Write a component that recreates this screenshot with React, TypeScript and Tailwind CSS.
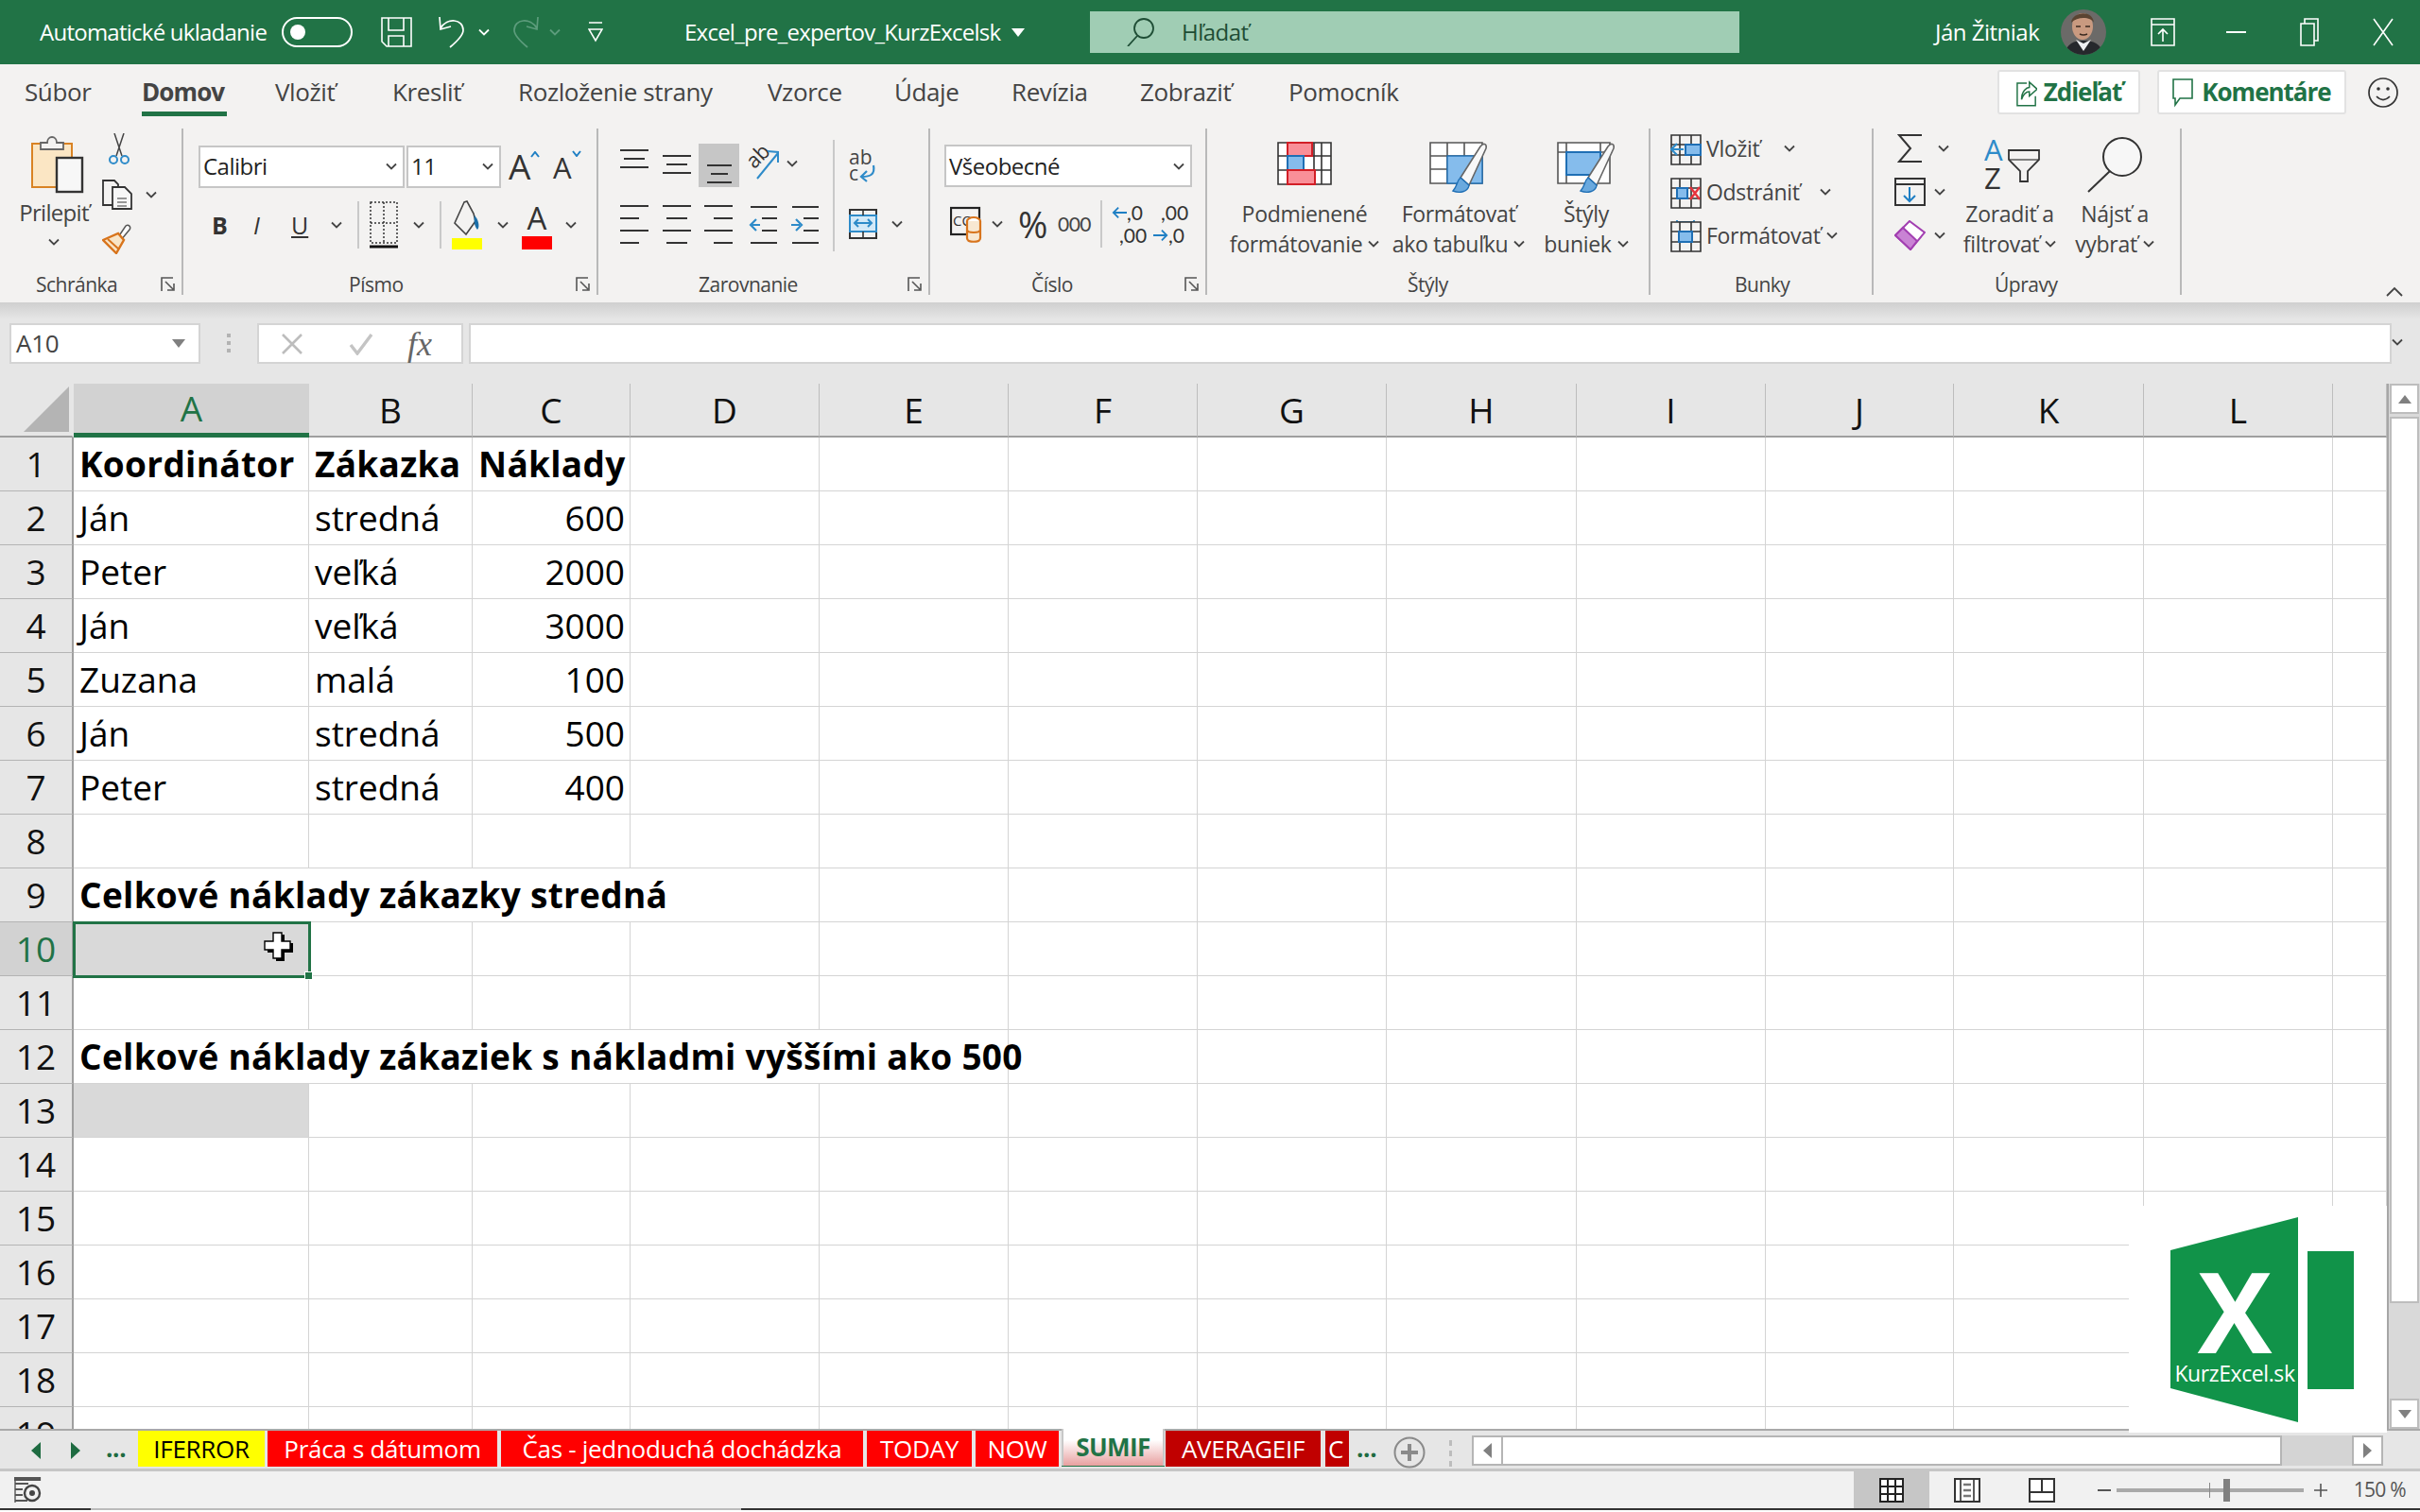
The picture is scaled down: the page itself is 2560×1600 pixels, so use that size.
import React from "react";

const Chev = ({ className = "", color = "#444" }: { className?: string; color?: string }) => (
  <svg width="12" height="8" viewBox="0 0 12 8" className={"shrink-0 " + className}>
    <path d="M1 1.5 6 6.5 11 1.5" fill="none" stroke={color} strokeWidth="1.8" />
  </svg>
);

const Launcher = ({ className = "" }: { className?: string }) => (
  <svg width="16" height="16" viewBox="0 0 16 16" className={"shrink-0 " + className}>
    <path d="M1 15V1h12M5 5l8 8M7 14h7V7" fill="none" stroke="#555" strokeWidth="1.6" />
  </svg>
);

const GroupLabel = ({ children, className = "" }: { children: React.ReactNode; className?: string }) => (
  <span className={"text-[21px] leading-[28px] text-[#444] tracking-[-0.5px] " + className}>{children}</span>
);

const Lines = ({ widths, step = 12, className = "" }: { widths: [number, number][]; step?: number; className?: string }) => (
  <svg width="30" height={(widths.length - 1) * step + 2} viewBox={`0 0 30 ${(widths.length - 1) * step + 2}`} className={"shrink-0 " + className}>
    {widths.map(([a, b], i) => (
      <path key={i} d={`M${a} ${i * step + 1}H${b}`} stroke="#333" strokeWidth="2" />
    ))}
  </svg>
);

const Paste = () => (
  <svg width="58" height="64" viewBox="0 0 58 64" className="shrink-0">
    <rect x="1" y="10" width="42" height="46" fill="#fbe6c4" stroke="#d98324" strokeWidth="2" />
    <path d="M10 16h24" stroke="#999" strokeWidth="2" />
    <path d="M10 16V9h7c0-8 10-8 10 0h7v7z" fill="#f3f2f1" stroke="#666" strokeWidth="1.8" />
    <rect x="27" y="25" width="27" height="36" fill="#f7f7f7" stroke="#333" strokeWidth="2.4" />
  </svg>
);
const Cut = () => (
  <svg width="24" height="34" viewBox="0 0 24 34" className="shrink-0">
    <path d="M7 0l8 24M17 0 9 24" stroke="#444" strokeWidth="1.5" fill="none" />
    <circle cx="6" cy="28" r="4" fill="none" stroke="#2e8bc9" strokeWidth="2" />
    <circle cx="18" cy="28" r="4" fill="none" stroke="#2e8bc9" strokeWidth="2" />
  </svg>
);
const Copy = () => (
  <svg width="32" height="32" viewBox="0 0 32 32" className="shrink-0">
    <path d="M1 1h12l4 4v22H1z" fill="#f3f2f1" stroke="#333" strokeWidth="1.8" />
    <path d="M11 8h13l7 7v16H11z" fill="#f7f7f7" stroke="#333" strokeWidth="1.8" />
    <path d="M16 20h10M16 24h10M16 28h10" stroke="#777" strokeWidth="1.5" />
  </svg>
);
const Brush = () => (
  <svg width="32" height="32" viewBox="0 0 32 32" className="shrink-0">
    <path d="M17 14 25 2c3-2 6 1 4 4l-9 11z" fill="#fff" stroke="#555" strokeWidth="1.5" />
    <path d="M1 17 17 10l6 7-8 14z" fill="#f8e5c8" stroke="#d8741c" strokeWidth="2.4" />
    <path d="M6 16l12 11" stroke="#d8741c" strokeWidth="2" />
  </svg>
);
const Combo = ({ children, className }: { children: React.ReactNode; className: string }) => (
  <div className={"h-[45px] bg-white border-2 border-[#c6c6c6] flex items-center justify-between pl-[3px] pr-[6px] text-[24px] text-[#222] shrink-0 " + className}>
    <span className="tracking-[-0.5px]">{children}</span>
    <Chev />
  </div>
);
const Bucket = () => (
  <svg width="34" height="52" viewBox="0 0 34 52" className="shrink-0">
    <path d="M13 2 3 24l12 12 10-14-2-8L16 1z" fill="#f3f2f1" stroke="#444" strokeWidth="1.6" />
    <path d="M24 16c4 4 6 12 3 15-3-3-4-9-3-15z" fill="#1a6ea8" />
    <rect x="0" y="40" width="32" height="12" fill="#ffff00" />
  </svg>
);
const FontColor = () => (
  <div className="flex flex-col items-center w-[32px] shrink-0">
    <span className="text-[33px] leading-[38px] text-[#333]">A</span>
    <div className="w-[32px] h-[14px] bg-[#ff0000]" />
  </div>
);
const Borders = () => (
  <svg width="30" height="50" viewBox="0 0 30 50" className="shrink-0">
    <path d="M1 1H29V44H1zM15 1V44M1 23H29" fill="none" stroke="#333" strokeWidth="1.5" strokeDasharray="2 2" />
    <path d="M0 48H30" stroke="#111" strokeWidth="3" />
  </svg>
);
const Orient = () => (
  <svg width="36" height="36" viewBox="0 0 36 36" className="shrink-0">
    <text x="1" y="20" fontSize="22" fill="#333" fontFamily="Open Sans" transform="rotate(-45 10 14)">ab</text>
    <path d="M11 34 33 7M22 5l11 1 0 11" fill="none" stroke="#2e8bc9" strokeWidth="2" />
  </svg>
);
const Outdent = ({ flip = false }: { flip?: boolean }) => (
  <svg width="30" height="40" viewBox="0 0 30 40" className="shrink-0">
    <path d="M2 1H30M2 39H30M14 13H30M14 26H30" stroke="#333" strokeWidth="2" />
    {flip ? (
      <path d="M1 20H10M6 14l6 6-6 6" fill="none" stroke="#2e8bc9" strokeWidth="2.2" />
    ) : (
      <path d="M12 20H3M8 14l-6 6 6 6" fill="none" stroke="#2e8bc9" strokeWidth="2.2" />
    )}
  </svg>
);
const Wrap = () => (
  <svg width="30" height="36" viewBox="0 0 30 36" className="shrink-0">
    <text x="0" y="16" fontSize="21" fill="#444" fontFamily="Open Sans">ab</text>
    <text x="0" y="33" fontSize="21" fill="#444" fontFamily="Open Sans">c</text>
    <path d="M26 17c2 10-4 12-12 12M19 23l-6 6 6 5" fill="none" stroke="#2e8bc9" strokeWidth="2.2" />
  </svg>
);
const Merge = () => (
  <svg width="30" height="32" viewBox="0 0 30 32" className="shrink-0">
    <rect x="1" y="1" width="28" height="30" fill="#f3f2f1" stroke="#333" strokeWidth="2" />
    <rect x="1" y="7" width="28" height="17" fill="#d3e9f8" stroke="#2e8bc9" strokeWidth="2" />
    <path d="M15 1V7M15 24V31" stroke="#333" strokeWidth="1.6" />
    <path d="M6 15H24M10 11l-4 4 4 4M20 11l4 4-4 4" fill="none" stroke="#2e8bc9" strokeWidth="2" />
  </svg>
);
const Accounting = () => (
  <svg width="36" height="42" viewBox="0 0 36 42" className="shrink-0">
    <rect x="1" y="4" width="30" height="28" fill="#f3f2f1" stroke="#222" strokeWidth="2.2" />
    <text x="3" y="23" fontSize="15" fill="#333" fontFamily="Open Sans">CC</text>
    <ellipse cx="25" cy="18" rx="7" ry="4" fill="#fff" stroke="#d8741c" strokeWidth="2.2" />
    <path d="M18 18V36c0 5 14 5 14 0V18M18 27c0 4 14 4 14 0" fill="#f8e8d2" stroke="#d8741c" strokeWidth="2.2" />
  </svg>
);
const CondFormat = () => (
  <svg width="58" height="46" viewBox="0 0 58 46" className="shrink-0">
    <path d="M1 1H57V45H1zM1 15H57M1 30H57M11 1V45M39 1V45M47 1V45" fill="#fff" stroke="#333" strokeWidth="1.6" />
    <rect x="11" y="1" width="26" height="14" fill="#f98f98" stroke="#d21f27" strokeWidth="2" />
    <rect x="11" y="15" width="17" height="15" fill="#85bcec" stroke="#1f6fb5" strokeWidth="2" />
    <rect x="11" y="30" width="29" height="15" fill="#f98f98" stroke="#d21f27" strokeWidth="2" />
  </svg>
);
const TableFormat = () => (
  <svg width="62" height="56" viewBox="0 0 62 56" className="shrink-0">
    <path d="M1 1H56V44H1zM1 15H56M1 29H56M19 1V44M37 1V44" fill="#fff" stroke="#555" strokeWidth="1.6" />
    <rect x="19" y="15" width="37" height="29" fill="#85bcec" stroke="#1f6fb5" strokeWidth="1.4" />
    <path d="M33 38 54 5c4-5 7-2 6 2L42 46z" fill="#f8f8f8" stroke="#666" strokeWidth="1.6" />
    <path d="M33 38c-4 3-3 9-8 14 7 3 16 1 17-6z" fill="#6aa9de" stroke="#1f6fb5" strokeWidth="1.4" />
  </svg>
);
const CellStyles = () => (
  <svg width="62" height="56" viewBox="0 0 62 56" className="shrink-0">
    <path d="M1 1H56V44H1zM1 11H56M10 1V44M46 1V11" fill="#fff" stroke="#555" strokeWidth="1.6" />
    <rect x="10" y="11" width="36" height="24" fill="#85bcec" stroke="#1f6fb5" strokeWidth="2" />
    <path d="M33 38 54 5c4-5 7-2 6 2L42 46z" fill="#f8f8f8" stroke="#666" strokeWidth="1.6" />
    <path d="M33 38c-4 3-3 9-8 14 7 3 16 1 17-6z" fill="#6aa9de" stroke="#1f6fb5" strokeWidth="1.4" />
  </svg>
);
const CellGrid = ({ kind }: { kind: "ins" | "del" | "fmt" }) => (
  <svg width="33" height="36" viewBox="0 0 33 36" className="shrink-0">
    {kind === "fmt" && <path d="M7 2V8M25 2V8M7 4H25" stroke="#2e8bc9" strokeWidth="1.8" />}
    <path d="M1 4H32V35H1zM1 14H32M1 25H32M10 4V35M22 4V35" fill="#f3f2f1" stroke="#333" strokeWidth="1.6" />
    {kind === "ins" && <rect x="16" y="14" width="16" height="11" fill="#85bcec" stroke="#1f6fb5" strokeWidth="2" />}
    {kind === "ins" && <path d="M14 19H2M7 13l-6 6 6 6" fill="none" stroke="#2e8bc9" strokeWidth="2.2" />}
    {kind === "del" && <rect x="7" y="14" width="11" height="11" fill="#85bcec" stroke="#1f6fb5" strokeWidth="2" />}
    {kind === "del" && <path d="M21 13 31 26M31 13 21 26" stroke="#e8323c" strokeWidth="2.4" />}
    {kind === "fmt" && <rect x="9" y="14" width="14" height="11" fill="#85bcec" stroke="#1f6fb5" strokeWidth="2" />}
  </svg>
);
const Sigma = () => (
  <svg width="28" height="30" viewBox="0 0 28 30" className="shrink-0">
    <path d="M26 1H2L14 15 2 29H26" fill="none" stroke="#333" strokeWidth="2" />
  </svg>
);
const FillDown = () => (
  <svg width="33" height="30" viewBox="0 0 33 30" className="shrink-0">
    <rect x="1" y="1" width="31" height="28" fill="none" stroke="#333" strokeWidth="2" />
    <path d="M1 7H32" stroke="#333" strokeWidth="2" />
    <path d="M16 10V25M10 19l6 6 6-6" fill="none" stroke="#1f7fc4" strokeWidth="2" />
  </svg>
);
const Eraser = () => (
  <svg width="33" height="32" viewBox="0 0 33 32" className="shrink-0">
    <path d="M1 16 16 1 32 13 17 31z" fill="#fff" stroke="#a23fb1" strokeWidth="2" />
    <path d="M1 16 9 8l15 14-7 9z" fill="#c983d4" stroke="#a23fb1" strokeWidth="2" />
  </svg>
);
const SortFilter = () => (
  <svg width="60" height="56" viewBox="0 0 60 56" className="shrink-0">
    <text x="0" y="26" fontSize="31" fill="#2e8bc9" fontFamily="Open Sans">A</text>
    <text x="0" y="56" fontSize="31" fill="#333" fontFamily="Open Sans">Z</text>
    <path d="M26 15H58V25L46 37V48H38V37L26 25z" fill="#f3f2f1" stroke="#333" strokeWidth="1.8" />
    <path d="M26 25H58" stroke="#333" strokeWidth="1.2" />
  </svg>
);
const Magnifier = () => (
  <svg width="60" height="60" viewBox="0 0 60 60" className="shrink-0">
    <circle cx="38" cy="22" r="20" fill="#f7f7f7" stroke="#333" strokeWidth="2" />
    <path d="M25 37 2 59" stroke="#333" strokeWidth="2" />
  </svg>
);

const TitleBar = () => (
  <div className="h-[68px] shrink-0 bg-[#217346] text-white flex items-center text-[24px]">
    <span className="ml-[42px] w-[243px] whitespace-nowrap tracking-[-0.75px] shrink-0">Automatické ukladanie</span>
    <div className="ml-[13px] w-[75px] h-[32px] rounded-full border-2 border-white flex items-center pl-[7px] shrink-0">
      <div className="w-[16px] h-[16px] rounded-full bg-white" />
    </div>
    <svg width="33" height="32" viewBox="0 0 33 32" className="ml-[30px] shrink-0">
      <path d="M1 1H32V31H6L1 26z" fill="none" stroke="#fff" strokeWidth="1.6" />
      <path d="M8 1V14H24V1M8 31V20H24V31" fill="none" stroke="#fff" strokeWidth="1.6" />
    </svg>
    <svg width="30" height="34" viewBox="0 0 30 34" className="ml-[27px] shrink-0">
      <path d="M2 1 3 14 14 11M3 13C10 1 27 3 27 15 27 21 19 28 13 33" fill="none" stroke="#fff" strokeWidth="1.7" />
    </svg>
    <Chev color="#fff" className="ml-[13px]" />
    <svg width="30" height="34" viewBox="0 0 30 34" className="ml-[23px] shrink-0">
      <path d="M28 1 27 14 16 11M27 13C20 1 3 3 3 15 3 21 11 28 17 33" fill="none" stroke="#5d9c7c" strokeWidth="1.7" />
    </svg>
    <Chev color="#5d9c7c" className="ml-[10px]" />
    <svg width="16" height="22" viewBox="0 0 16 22" className="ml-[29px] shrink-0">
      <path d="M1 1H15M1 8H15L8 20z" fill="none" stroke="#fff" strokeWidth="1.6" />
    </svg>
    <span className="ml-[86px] w-[335px] whitespace-nowrap tracking-[-0.75px] shrink-0">Excel_pre_expertov_KurzExcelsk</span>
    <svg width="14" height="9" viewBox="0 0 14 9" className="ml-[11px] shrink-0">
      <path d="M0 0H14L7 9z" fill="#fff" />
    </svg>
    <div className="ml-[69px] w-[687px] h-[44px] bg-[#a0cdb4] flex items-center shrink-0 text-[#1e4d35]">
      <svg width="30" height="30" viewBox="0 0 30 30" className="ml-[39px] shrink-0">
        <circle cx="18" cy="11" r="10" fill="none" stroke="#1e4d35" strokeWidth="1.8" />
        <path d="M11 19 1 30" stroke="#1e4d35" strokeWidth="1.8" />
      </svg>
      <span className="ml-[28px] tracking-[-0.5px]">Hľadať</span>
    </div>
    <span className="ml-[207px] w-[114px] whitespace-nowrap tracking-[-0.5px] shrink-0">Ján Žitniak</span>
    <svg width="48" height="48" viewBox="0 0 48 48" className="ml-[19px] shrink-0">
      <defs>
        <clipPath id="av"><circle cx="24" cy="24" r="24" /></clipPath>
      </defs>
      <g clipPath="url(#av)">
        <rect width="48" height="48" fill="#6b6a68" />
        <path d="M4 48c2-12 10-15 20-15s19 3 21 15z" fill="#26282c" />
        <path d="M16 32 24 44 32 32 24 36z" fill="#eef0f2" />
        <ellipse cx="23" cy="18" rx="11" ry="14" fill="#c99a80" />
        <path d="M11 14C12 2 34 0 35 14 32 8 18 7 11 14z" fill="#5a4432" />
        <path d="M16 18h5M26 18h5M20 26q4 2 8 0" stroke="#3a2a20" strokeWidth="1.4" fill="none" />
      </g>
    </svg>
    <svg width="26" height="30" viewBox="0 0 26 30" className="ml-[47px] shrink-0">
      <path d="M1 1H25V29H1zM1 7H25" fill="none" stroke="#fff" strokeWidth="1.6" />
      <path d="M13 25V12M8 17l5-5 5 5" fill="none" stroke="#fff" strokeWidth="1.6" />
    </svg>
    <div className="ml-[54px] w-[21px] h-[2px] bg-white shrink-0" />
    <svg width="20" height="30" viewBox="0 0 20 30" className="ml-[57px] shrink-0">
      <path d="M1 6H15V29H1zM5 6V1H19V24H15" fill="none" stroke="#fff" strokeWidth="1.6" />
    </svg>
    <svg width="22" height="30" viewBox="0 0 22 30" className="ml-[57px] shrink-0">
      <path d="M1 1 21 29M21 1 1 29" stroke="#fff" strokeWidth="1.6" />
    </svg>
  </div>
);

const tabs: [string, string][] = [
  ["Vložiť", "w-[124px]"],
  ["Kresliť", "w-[133px]"],
  ["Rozloženie strany", "w-[264px]"],
  ["Vzorce", "w-[134px]"],
  ["Údaje", "w-[124px]"],
  ["Revízia", "w-[136px]"],
  ["Zobraziť", "w-[157px]"],
  ["Pomocník", "w-[140px]"],
];

const TabRow = () => (
  <div className="h-[58px] shrink-0 bg-[#f3f2f1] flex items-start text-[26px] text-[#444] tracking-[-0.4px]">
    <span className="ml-[26px] w-[124px] mt-[11px] leading-[36px] shrink-0">Súbor</span>
    <div className="w-[141px] mt-[11px] flex shrink-0">
      <div className="flex flex-col w-[90px]">
        <span className="leading-[36px] font-bold tracking-[-0.9px]">Domov</span>
        <div className="h-[5px] mt-[3px] bg-[#217346]" />
      </div>
    </div>
    {tabs.map(([t, c]) => (
      <span key={t} className={c + " mt-[11px] leading-[36px] whitespace-nowrap shrink-0"}>{t}</span>
    ))}
    <div className="ml-auto mr-[23px] mt-[6px] flex items-center">
      <div className="w-[151px] h-[47px] bg-white border-2 border-[#e2e2e2] rounded-[3px] flex items-center justify-center text-[#217346] font-bold">
        <svg width="22" height="34" viewBox="0 0 24 36" className="mr-[7px] shrink-0">
          <path d="M12 7H1V33H22V22" fill="none" stroke="#217346" strokeWidth="1.6" />
          <path d="M6 26C6 16 12 12 15 12V6L24 14 15 22V17C11 17 8 20 6 26z" fill="none" stroke="#217346" strokeWidth="1.6" />
        </svg>
        <span className="tracking-[-1px]">Zdieľať</span>
      </div>
      <div className="ml-[18px] w-[200px] h-[47px] bg-white border-2 border-[#e2e2e2] rounded-[3px] flex items-center justify-center text-[#217346] font-bold">
        <svg width="22" height="32" viewBox="0 0 22 32" className="mr-[9px] shrink-0">
          <path d="M1 2H21V22H8L3 29V22H1z" fill="none" stroke="#217346" strokeWidth="1.6" />
        </svg>
        <span className="tracking-[-1px]">Komentáre</span>
      </div>
      <svg width="32" height="32" viewBox="0 0 32 32" className="ml-[23px] shrink-0">
        <circle cx="16" cy="16" r="15" fill="none" stroke="#333" strokeWidth="1.7" />
        <circle cx="11" cy="12" r="1.8" fill="#333" />
        <circle cx="21" cy="12" r="1.8" fill="#333" />
        <path d="M9 20q7 7 14 0" fill="none" stroke="#333" strokeWidth="1.7" />
      </svg>
    </div>
  </div>
);

const groupCls = "h-[176px] mt-[10px] border-r-2 border-[#b9b9b9] flex flex-col shrink-0 ";
const LabelRow = ({ label, labelCls, launcher = true }: { label: string; labelCls: string; launcher?: boolean }) => (
  <div className="h-[22px] flex items-center">
    <GroupLabel className={labelCls}>{label}</GroupLabel>
    {launcher && <Launcher className="ml-auto mr-[6px]" />}
  </div>
);

const BigBtn = ({ icon, l1, l2, iconCls, cls }: { icon: React.ReactNode; l1: string; l2: string; iconCls: string; cls: string }) => (
  <div className={"flex flex-col items-center shrink-0 " + cls}>
    <div className={"flex items-start " + iconCls}>{icon}</div>
    <span className="text-[23px] leading-[32px] text-[#444] tracking-[-0.3px] whitespace-nowrap">{l1}</span>
    <span className="text-[23px] leading-[32px] text-[#444] tracking-[-0.3px] whitespace-nowrap flex items-center">
      {l2}
      <Chev className="ml-[6px]" />
    </span>
  </div>
);

const SmallCellBtn = ({ kind, label, chevCls, cls = "" }: { kind: "ins" | "del" | "fmt"; label: string; chevCls: string; cls?: string }) => (
  <div className={"h-[36px] flex items-center " + cls}>
    <CellGrid kind={kind} />
    <span className="ml-[5px] text-[23px] text-[#444] tracking-[-0.3px] whitespace-nowrap">{label}</span>
    <Chev className={chevCls} />
  </div>
);

const Ribbon = () => (
  <div className="h-[194px] shrink-0 bg-[#f3f2f1] flex">
    {/* Schránka */}
    <div className={groupCls + "w-[194px]"}>
      <div className="h-[154px] flex">
        <div className="ml-[12px] w-[90px] flex flex-col items-center shrink-0">
          <div className="mt-[6px] ml-[10px]"><Paste /></div>
          <span className="mt-[3px] text-[24px] leading-[32px] text-[#444] tracking-[-0.7px]">Prilepiť</span>
          <Chev className="mt-[11px]" />
        </div>
        <div className="ml-[6px] flex flex-col">
          <div className="ml-[6px] mt-[5px]"><Cut /></div>
          <div className="mt-[15px] flex items-center">
            <Copy />
            <Chev className="ml-[14px]" />
          </div>
          <div className="mt-[15px]"><Brush /></div>
        </div>
      </div>
      <LabelRow label="Schránka" labelCls="ml-[38px]" />
    </div>
    {/* Písmo */}
    <div className={groupCls + "w-[439px]"}>
      <div className="h-[154px] flex flex-col">
        <div className="flex items-center mt-[17px] ml-[16px]">
          <Combo className="w-[218px]">Calibri</Combo>
          <Combo className="w-[100px] ml-[2px]">11</Combo>
          <div className="ml-[8px] flex items-start w-[38px]">
            <span className="text-[37px] leading-[44px] text-[#333]">A</span>
            <svg width="10" height="7" viewBox="0 0 10 7" className="mt-[6px] shrink-0"><path d="M1 6 5 1 9 6" fill="none" stroke="#1f7fc4" strokeWidth="2" /></svg>
          </div>
          <div className="ml-[9px] flex items-start">
            <span className="text-[31px] leading-[44px] text-[#333] mt-[2px]">A</span>
            <svg width="10" height="7" viewBox="0 0 10 7" className="mt-[6px] shrink-0"><path d="M1 1 5 6 9 1" fill="none" stroke="#1f7fc4" strokeWidth="2" /></svg>
          </div>
        </div>
        <div className="flex items-center mt-[14px] h-[50px] text-[#333]">
          <span className="ml-[30px] w-[20px] text-[25px] font-bold leading-[30px]">B</span>
          <span className="ml-[24px] w-[16px] text-[25px] italic leading-[30px]">I</span>
          <span className="ml-[24px] w-[20px] text-[25px] underline leading-[30px]">U</span>
          <Chev className="ml-[22px]" />
          <div className="ml-[16px] w-[2px] h-[50px] bg-[#c9c9c9]" />
          <div className="ml-[11px]"><Borders /></div>
          <Chev className="ml-[16px]" />
          <div className="ml-[16px] w-[2px] h-[50px] bg-[#c9c9c9]" />
          <div className="ml-[11px]"><Bucket /></div>
          <Chev className="ml-[14px]" />
          <div className="ml-[14px]"><FontColor /></div>
          <Chev className="ml-[14px]" />
        </div>
      </div>
      <LabelRow label="Písmo" labelCls="ml-[175px]" />
    </div>
    {/* Zarovnanie */}
    <div className={groupCls + "w-[351px]"}>
      <div className="h-[154px] flex">
        <div className="flex flex-col">
          <div className="flex items-start mt-[16px] ml-[23px] h-[46px]">
            <Lines className="mt-[6px]" widths={[[0, 30], [4, 26], [0, 30]]} step={9} />
            <Lines className="mt-[12px] ml-[15px]" widths={[[0, 30], [4, 26], [0, 30]]} step={9} />
            <div className="ml-[8px] w-[43px] h-[46px] bg-[#c6c6c6] flex items-end justify-center pb-[4px]">
              <Lines widths={[[2, 28], [6, 24], [2, 28]]} step={9} />
            </div>
            <div className="ml-[8px] mt-[3px] flex items-center">
              <Orient />
              <Chev className="ml-[6px]" />
            </div>
          </div>
          <div className="flex items-center mt-[19px] ml-[23px]">
            <Lines widths={[[0, 30], [0, 20], [0, 30], [0, 20]]} step={13} />
            <Lines className="ml-[15px]" widths={[[0, 30], [4, 26], [0, 30], [4, 26]]} step={13} />
            <Lines className="ml-[14px]" widths={[[0, 30], [10, 30], [0, 30], [10, 30]]} step={13} />
            <div className="ml-[17px]"><Outdent /></div>
            <div className="ml-[14px]"><Outdent flip /></div>
          </div>
        </div>
        <div className="ml-[15px] w-[2px] h-[118px] mt-[12px] bg-[#c9c9c9] shrink-0" />
        <div className="flex flex-col ml-[15px]">
          <div className="mt-[22px]"><Wrap /></div>
          <div className="mt-[27px] flex items-center">
            <Merge />
            <Chev className="ml-[15px]" />
          </div>
        </div>
      </div>
      <LabelRow label="Zarovnanie" labelCls="ml-[106px]" />
    </div>
    {/* Číslo */}
    <div className={groupCls + "w-[293px]"}>
      <div className="h-[154px] flex flex-col">
        <Combo className="w-[262px] ml-[15px] mt-[17px]">Všeobecné</Combo>
        <div className="flex items-center mt-[14px] h-[50px]">
          <div className="ml-[21px]"><Accounting /></div>
          <Chev className="ml-[8px]" />
          <span className="ml-[16px] text-[38px] leading-[44px] text-[#333] w-[34px] tracking-[-2px]">%</span>
          <span className="ml-[8px] text-[21px] leading-[28px] text-[#444] tracking-[-0.5px] font-['Lato',sans-serif]">000</span>
          <div className="ml-[10px] w-[2px] h-[50px] bg-[#c9c9c9]" />
          <div className="ml-[10px] w-[33px] flex flex-col text-[21px] leading-[24px] text-[#333] font-['Lato',sans-serif]">
            <div className="flex items-center">
              <svg width="18" height="16" viewBox="0 0 18 16"><path d="M18 8H2M8 2 2 8l6 6" fill="none" stroke="#1f7fc4" strokeWidth="2" /></svg>
              <span>,0</span>
            </div>
            <span className="ml-[8px]">,00</span>
          </div>
          <div className="ml-[11px] w-[33px] flex flex-col text-[21px] leading-[24px] text-[#333] font-['Lato',sans-serif]">
            <span className="ml-[8px]">,00</span>
            <div className="flex items-center">
              <svg width="18" height="16" viewBox="0 0 18 16"><path d="M0 8H16M10 2l6 6-6 6" fill="none" stroke="#1f7fc4" strokeWidth="2" /></svg>
              <span>,0</span>
            </div>
          </div>
        </div>
      </div>
      <LabelRow label="Číslo" labelCls="ml-[107px]" />
    </div>
    {/* Štýly */}
    <div className={groupCls + "w-[469px]"}>
      <div className="h-[154px] flex items-start pt-[14px]">
        <BigBtn cls="ml-[17px] w-[172px]" iconCls="h-[60px]" icon={<CondFormat />} l1="Podmienené" l2="formátovanie" />
        <BigBtn cls="ml-[4px] w-[146px]" iconCls="h-[60px]" icon={<TableFormat />} l1="Formátovať" l2="ako tabuľku" />
        <BigBtn cls="ml-[6px] w-[112px]" iconCls="h-[60px]" icon={<CellStyles />} l1="Štýly" l2="buniek" />
      </div>
      <LabelRow label="Štýly" labelCls="ml-[212px]" launcher={false} />
    </div>
    {/* Bunky */}
    <div className={groupCls + "w-[236px]"}>
      <div className="h-[154px] flex flex-col ml-[21px] pt-[3px] gap-[10px]">
        <SmallCellBtn kind="ins" label="Vložiť" chevCls="ml-[26px]" />
        <SmallCellBtn kind="del" label="Odstrániť" chevCls="ml-[21px]" />
        <SmallCellBtn kind="fmt" label="Formátovať" chevCls="ml-[6px]" />
      </div>
      <LabelRow label="Bunky" labelCls="ml-[89px]" launcher={false} />
    </div>
    {/* Úpravy */}
    <div className={groupCls + "w-[326px]"}>
      <div className="h-[154px] flex">
        <div className="flex flex-col ml-[22px] pt-[6px] w-[65px] shrink-0">
          <div className="flex items-center h-[30px] ml-[3px]"><Sigma /><Chev className="ml-[15px]" /></div>
          <div className="flex items-center h-[30px] mt-[16px]"><FillDown /><Chev className="ml-[9px]" /></div>
          <div className="flex items-center h-[32px] mt-[15px]"><Eraser /><Chev className="ml-[9px]" /></div>
        </div>
        <BigBtn cls="ml-[-2px] w-[118px] pt-[8px]" iconCls="h-[66px] ml-[6px]" icon={<SortFilter />} l1="Zoradiť a" l2="filtrovať" />
        <BigBtn cls="ml-[-2px] w-[108px] pt-[8px]" iconCls="h-[66px]" icon={<Magnifier />} l1="Nájsť a" l2="vybrať" />
      </div>
      <LabelRow label="Úpravy" labelCls="ml-[128px]" launcher={false} />
    </div>
    <div className="flex-1 flex items-end justify-end pb-[6px] pr-[18px]">
      <svg width="18" height="11" viewBox="0 0 18 11"><path d="M1 10 9 2l8 8" fill="none" stroke="#444" strokeWidth="1.8" /></svg>
    </div>
  </div>
);

const FormulaBar = () => (
  <div className="h-[86px] shrink-0 flex items-start pt-[22px] bg-[linear-gradient(#cfcfcf,#e6e6e6_18px)]">
    <div className="ml-[10px] w-[202px] h-[43px] bg-white border-2 border-[#d4d4d4] flex items-center justify-between pl-[5px] pr-[14px] text-[26px] text-[#444] shrink-0 tracking-[-0.3px]">
      <span>A10</span>
      <svg width="14" height="9" viewBox="0 0 14 9"><path d="M0 0H14L7 9z" fill="#808080" /></svg>
    </div>
    <div className="ml-[28px] mt-[11px] flex flex-col gap-[4px] shrink-0">
      <div className="w-[4px] h-[4px] bg-[#b3b3b3]" />
      <div className="w-[4px] h-[4px] bg-[#b3b3b3]" />
      <div className="w-[4px] h-[4px] bg-[#b3b3b3]" />
    </div>
    <div className="ml-[28px] w-[218px] h-[43px] bg-white border-2 border-[#d4d4d4] flex items-center shrink-0">
      <svg width="24" height="24" viewBox="0 0 24 24" className="ml-[23px] shrink-0"><path d="M2 2 22 22M22 2 2 22" stroke="#bdbdbd" strokeWidth="2.6" /></svg>
      <svg width="26" height="24" viewBox="0 0 26 24" className="ml-[48px] shrink-0"><path d="M2 13 9 22 24 2" fill="none" stroke="#c4c4c4" strokeWidth="3.4" /></svg>
      <span className="ml-[36px] text-[36px] italic text-[#666] font-['Liberation_Serif',serif] leading-[40px]">fx</span>
    </div>
    <div className="ml-[6px] w-[2034px] h-[43px] bg-white border-2 border-[#d4d4d4] shrink-0" />
    <Chev className="ml-[0px] mt-[16px]" />
  </div>
);

const colCls = ["w-[249px]", "w-[173px]", "w-[167px]", "w-[200px]", "w-[200px]", "w-[200px]", "w-[200px]", "w-[201px]", "w-[200px]", "w-[199px]", "w-[201px]", "w-[200px]", "w-[57px]"];
const colNames = ["A", "B", "C", "D", "E", "F", "G", "H", "I", "J", "K", "L", ""];

type RowData = { n: number; a?: string; b?: string; c?: string; bold?: boolean };
const data: RowData[] = [
  { n: 1, a: "Koordinátor", b: "Zákazka", c: "Náklady", bold: true },
  { n: 2, a: "Ján", b: "stredná", c: "600" },
  { n: 3, a: "Peter", b: "veľká", c: "2000" },
  { n: 4, a: "Ján", b: "veľká", c: "3000" },
  { n: 5, a: "Zuzana", b: "malá", c: "100" },
  { n: 6, a: "Ján", b: "stredná", c: "500" },
  { n: 7, a: "Peter", b: "stredná", c: "400" },
  { n: 8 },
];

const cellCls = "h-[57px] shrink-0 border-r border-b border-[#d4d4d4] flex items-center ";
const hdrBase = "w-[78px] h-[57px] shrink-0 border-r-2 border-r-[#9f9f9f] border-b border-b-[#b4b4b4] flex items-center justify-center ";
const hdrCls = hdrBase + "bg-[#e6e6e6] text-[#111]";

const Row = ({ r }: { r: RowData }) => (
  <div className="flex h-[57px]">
    <div className={hdrCls}>{r.n}</div>
    {colCls.map((w, i) => (
      <div
        key={i}
        className={
          cellCls +
          w +
          (i === 2 && !r.bold ? " justify-end pr-[5px]" : " pl-[6px]") +
          (r.bold ? " font-bold tracking-[0.3px]" : "")
        }
      >
        {i === 0 ? r.a : i === 1 ? r.b : i === 2 ? r.c : null}
      </div>
    ))}
  </div>
);

const SpanRow = ({ n, text, spanCls, rest }: { n: number; text: string; spanCls: string; rest: number }) => (
  <div className="flex h-[57px]">
    <div className={hdrCls}>{n}</div>
    <div className={cellCls + "pl-[6px] font-bold whitespace-nowrap tracking-[0.3px] " + spanCls}>{text}</div>
    {colCls.slice(rest).map((w, i) => (
      <div key={i} className={cellCls + w} />
    ))}
  </div>
);

const Grid = () => (
  <div className="flex-1 h-[1106px] overflow-hidden text-[37px] text-black relative">
    <div className="flex h-[57px]">
      <div className="w-[78px] h-[57px] shrink-0 bg-[#e6e6e6] border-r-2 border-r-[#e6e6e6] border-b-2 border-b-[#9f9f9f] flex items-end justify-end pr-[3px] pb-[4px]">
        <svg width="48" height="48" viewBox="0 0 48 48"><path d="M48 0V48H0z" fill="#b4b4b4" /></svg>
      </div>
      {colCls.map((w, i) => (
        <div
          key={i}
          className={
            "h-[57px] shrink-0 flex items-center justify-center " +
            w +
            (i === 0
              ? " bg-[#d2d2d2] border-b-[5px] border-b-[#217346] text-[#217346]"
              : " bg-[#e6e6e6] border-r border-r-[#bdbdbd] border-b-2 border-b-[#9f9f9f] text-[#111]")
          }
        >
          {colNames[i]}
        </div>
      ))}
    </div>
    {data.map((r) => (
      <Row key={r.n} r={r} />
    ))}
    <SpanRow n={9} text="Celkové náklady zákazky stredná" spanCls="w-[789px]" rest={4} />
    <div className="flex h-[57px] relative">
      <div className={hdrBase + "bg-[#d2d2d2] text-[#217346]"}>10</div>
      {colCls.map((w, i) => (
        <div key={i} className={cellCls + w + (i === 0 ? " bg-[#d9d9d9]" : "")} />
      ))}
      <div className="absolute left-[77px] top-[-1px] w-[252px] h-[60px] border-[3px] border-[#217346] flex items-center justify-end pr-[15px]">
        <svg width="32" height="32" viewBox="0 0 32 32" className="mb-[6px]">
          <path d="M13 3H22V12H31V22H22V31H13V22H4V12H13z" fill="#000" />
          <path d="M10 1H19V10H28V19H19V28H10V19H1V10H10z" fill="#fff" stroke="#000" strokeWidth="1.4" />
        </svg>
        <div className="absolute right-[-5px] bottom-[-5px] w-[9px] h-[9px] bg-[#217346] border border-white" />
      </div>
    </div>
    <Row r={{ n: 11 }} />
    <SpanRow n={12} text="Celkové náklady zákaziek s nákladmi vyššími ako 500" spanCls="w-[989px]" rest={5} />
    <div className="flex h-[57px]">
      <div className={hdrCls}>13</div>
      {colCls.map((w, i) => (
        <div key={i} className={cellCls + w + (i === 0 ? " bg-[#d9d9d9]" : "")} />
      ))}
    </div>
    {[14, 15, 16, 17, 18, 19].map((n) => (
      <Row key={n} r={{ n }} />
    ))}
  </div>
);

const VScroll = () => (
  <div className="w-[35px] h-[1106px] shrink-0 bg-[#d9d9d9] border-l-2 border-[#a6a6a6] flex flex-col items-center">
    <div className="w-[31px] h-[32px] bg-white border-2 border-[#bdbdbd] flex items-center justify-center shrink-0">
      <svg width="14" height="9" viewBox="0 0 14 9"><path d="M0 9H14L7 0z" fill="#808080" /></svg>
    </div>
    <div className="w-[31px] h-[938px] mt-[3px] bg-white border-2 border-[#bdbdbd] shrink-0" />
    <div className="w-[31px] h-[32px] mt-auto bg-white border-2 border-[#bdbdbd] flex items-center justify-center shrink-0">
      <svg width="14" height="9" viewBox="0 0 14 9"><path d="M0 0H14L7 9z" fill="#808080" /></svg>
    </div>
  </div>
);

const tabCls = "h-[38px] flex items-center justify-center shrink-0 whitespace-nowrap ";

const SheetTabs = () => (
  <div className="h-[42px] shrink-0 bg-[#e6e6e6] border-t-2 border-[#a9a9a9] flex items-start text-[26px] tracking-[-0.3px]">
    <svg width="12" height="18" viewBox="0 0 12 18" className="ml-[32px] mt-[12px] shrink-0"><path d="M11 0V18L1 9z" fill="#1e6b41" /></svg>
    <svg width="12" height="18" viewBox="0 0 12 18" className="ml-[30px] mt-[12px] shrink-0"><path d="M1 0V18L11 9z" fill="#1e6b41" /></svg>
    <span className="ml-[26px] mt-[3px] text-[#1e6b41] font-bold leading-[30px] w-[34px] shrink-0">...</span>
    <div className={tabCls + "w-[134px] bg-[#ffff00] text-black"}>IFERROR</div>
    <div className={tabCls + "ml-[3px] w-[243px] bg-[#ff0000] text-white"}>Práca s dátumom</div>
    <div className={tabCls + "ml-[4px] w-[383px] bg-[#ff0000] text-white"}>Čas - jednoduchá dochádzka</div>
    <div className={tabCls + "ml-[4px] w-[111px] bg-[#ff0000] text-white"}>TODAY</div>
    <div className={tabCls + "ml-[4px] w-[88px] bg-[#ff0000] text-white"}>NOW</div>
    <div className="ml-[3px] w-[109px] h-[40px] mt-[-2px] shrink-0 flex flex-col">
      <div className="flex-1 flex items-center justify-center font-bold text-[#217346] bg-[linear-gradient(#ffffff_30%,#e8a0a0)] border-x-2 border-[#c8c8c8] tracking-[-0.6px]">SUMIF</div>
      <div className="h-[3px] bg-[#217346]" />
    </div>
    <div className={tabCls + "ml-[1px] w-[164px] bg-[#c00000] text-white"}>AVERAGEIF</div>
    <div className="h-[38px] ml-[5px] w-[25px] bg-[#c00000] text-white shrink-0 overflow-hidden flex items-center pl-[3px]">C</div>
    <span className="ml-[8px] mt-[3px] text-[#1e6b41] font-bold leading-[30px] w-[26px] shrink-0">...</span>
    <svg width="34" height="34" viewBox="0 0 34 34" className="ml-[13px] mt-[6px] shrink-0">
      <circle cx="17" cy="17" r="15.5" fill="none" stroke="#8a8a8a" strokeWidth="2" />
      <path d="M8 17H26M17 8V26" stroke="#8a8a8a" strokeWidth="4" />
    </svg>
    <div className="ml-[25px] mt-[10px] flex flex-col gap-[5px] shrink-0">
      <div className="w-[3px] h-[6px] bg-[#bdbdbd]" />
      <div className="w-[3px] h-[6px] bg-[#bdbdbd]" />
      <div className="w-[3px] h-[6px] bg-[#bdbdbd]" />
    </div>
    <div className="ml-[21px] mt-[5px] w-[964px] h-[32px] flex shrink-0 bg-[#d4d4d4]">
      <div className="w-[33px] h-[32px] bg-white border-2 border-[#b5b5b5] flex items-center justify-center shrink-0">
        <svg width="9" height="16" viewBox="0 0 9 16"><path d="M9 0V16L0 8z" fill="#808080" /></svg>
      </div>
      <div className="w-[824px] h-[32px] bg-white border-2 border-l-0 border-[#b5b5b5] shrink-0" />
      <div className="w-[33px] h-[32px] ml-auto bg-white border-2 border-[#b5b5b5] flex items-center justify-center shrink-0">
        <svg width="9" height="16" viewBox="0 0 9 16"><path d="M0 0V16L9 8z" fill="#808080" /></svg>
      </div>
    </div>
  </div>
);

const StatusBar = () => (
  <div className="h-[42px] shrink-0 bg-[#f1f1f1] border-t-[3px] border-[#c6c6c6] flex items-center text-[#555]">
    <svg width="30" height="28" viewBox="0 0 30 28" className="ml-[15px] shrink-0">
      <path d="M1 1H27V3H1zM1 7H15M1 13H9M1 19H9M1 25H14" stroke="#555" strokeWidth="2.2" fill="none" />
      <path d="M1 4V27" stroke="#555" strokeWidth="1.4" />
      <circle cx="19" cy="17" r="8" fill="none" stroke="#444" strokeWidth="2.4" />
      <circle cx="19" cy="17" r="3" fill="#444" />
    </svg>
    <div className="ml-auto w-[80px] h-[39px] bg-[#c6c6c6] flex items-center justify-center shrink-0">
      <svg width="26" height="26" viewBox="0 0 26 26"><path d="M1 1H25V25H1zM1 9H25M1 17H25M9 1V25M17 1V25" fill="#fff" stroke="#222" strokeWidth="2" /></svg>
    </div>
    <svg width="28" height="26" viewBox="0 0 28 26" className="ml-[26px] shrink-0"><path d="M1 1H27V25H1z" fill="#fff" stroke="#333" strokeWidth="2" /><path d="M7 1V25M21 1V25" stroke="#333" strokeWidth="1.6" /><path d="M10 7H18M10 13H18M10 19H18" stroke="#777" strokeWidth="2.6" /></svg>
    <svg width="28" height="26" viewBox="0 0 28 26" className="ml-[51px] shrink-0"><path d="M1 1H27V25H1zM1 15H27M14 1V15" fill="#fff" stroke="#333" strokeWidth="2" /></svg>
    <div className="ml-[45px] w-[14px] h-[2px] bg-[#555] shrink-0" />
    <div className="ml-[6px] w-[198px] h-[4px] bg-[#a9a9a9] flex items-center shrink-0">
      <div className="ml-[98px] w-[1px] h-[16px] bg-[#888]" />
      <div className="ml-[14px] w-[7px] h-[24px] bg-[#808080]" />
    </div>
    <svg width="14" height="14" viewBox="0 0 14 14" className="ml-[11px] shrink-0"><path d="M0 7H14M7 0V14" stroke="#555" strokeWidth="1.6" /></svg>
    <span className="ml-[28px] mr-[15px] text-[21px] tracking-[-0.7px] whitespace-nowrap">150 %</span>
  </div>
);

const Logo = () => (
  <div className="absolute left-[2252px] top-[1276px] w-[273px] h-[240px] bg-white">
    <svg width="273" height="240" viewBox="0 0 273 240">
      <path d="M44 47 179 12V229L44 193z" fill="#119349" />
      <rect x="189" y="48" width="49" height="146" fill="#119349" />
      <text x="112" y="156" textAnchor="middle" fontSize="118" fontWeight="700" fill="#fff" fontFamily="Open Sans">X</text>
      <text x="112" y="186" textAnchor="middle" fontSize="23" fill="#fff" fontFamily="Open Sans" letterSpacing="-0.4">KurzExcel.sk</text>
    </svg>
  </div>
);

export default function App() {
  return (
    <div className="w-[2560px] h-[1600px] relative overflow-hidden flex flex-col bg-white font-['Open_Sans',sans-serif]">
      <TitleBar />
      <TabRow />
      <Ribbon />
      <FormulaBar />
      <div className="flex shrink-0">
        <Grid />
        <VScroll />
      </div>
      <SheetTabs />
      <StatusBar />
      <div className="h-[2px] shrink-0 flex bg-[#333]">
        <div className="ml-[96px] w-[688px] bg-[#bbb]" />
      </div>
      <Logo />
    </div>
  );
}
